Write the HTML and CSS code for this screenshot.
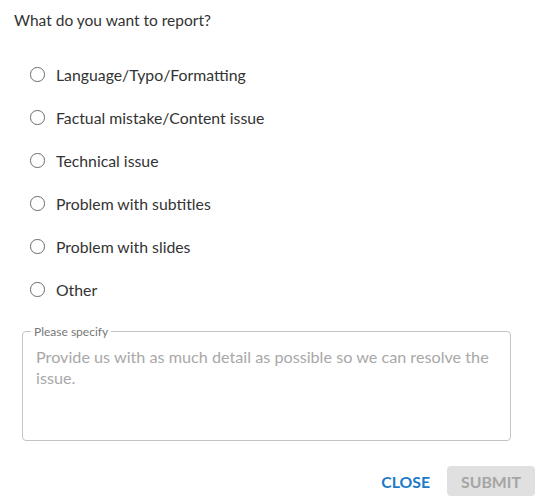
FILE: index.html
```html
<!DOCTYPE html>
<html>
<head>
<meta charset="utf-8">
<link rel="stylesheet" href="styles.css">
</head>
<body>
<div class="dialog">
  <div class="title">What do you want to report?</div>
  <div class="options">
    <label class="option"><span class="radio"></span><span class="label">Language/Typo/Formatting</span></label>
    <label class="option"><span class="radio"></span><span class="label">Factual mistake/Content issue</span></label>
    <label class="option"><span class="radio"></span><span class="label">Technical issue</span></label>
    <label class="option"><span class="radio"></span><span class="label">Problem with subtitles</span></label>
    <label class="option"><span class="radio"></span><span class="label">Problem with slides</span></label>
    <label class="option"><span class="radio"></span><span class="label">Other</span></label>
  </div>
  <fieldset class="specify">
    <legend class="legend">Please specify</legend>
    <div class="placeholder">Provide us with as much detail as possible so we can resolve the issue.</div>
  </fieldset>
  <div class="actions">
    <button class="btn close">CLOSE</button>
    <button class="btn submit">SUBMIT</button>
  </div>
</div>
</body>
</html>
```
FILE: styles.css
```css
html, body {
  margin: 0;
  padding: 0;
  background: #fff;
}
body {
  font-family: Lato, "Liberation Sans", sans-serif;
  color: #333;
}
.dialog {
  width: 539px;
  height: 499px;
  box-sizing: border-box;
  padding: 10px 0 0 14px;
  display: flex;
  flex-direction: column;
}
.title {
  font-size: 15.5px;
  line-height: 20px;
}
.options {
  display: flex;
  flex-direction: column;
  margin-top: 34px;
  padding-left: 16px;
}
.option {
  display: flex;
  align-items: center;
  height: 43px;
}
.option:first-child {
  margin-top: -11px;
}
.radio {
  width: 12.5px;
  height: 12.5px;
  border: 1.5px solid #6b6b6b;
  border-radius: 50%;
  margin-right: 11.5px;
}
.label {
  font-size: 15.8px;
  color: #333;
}
.specify {
  margin: 13px 0 0 8px;
  width: 489px;
  height: 117px;
  box-sizing: border-box;
  border: 1px solid #c4c4c4;
  border-radius: 4px;
  padding: 0 13px;
}
.legend {
  font-size: 12px;
  color: #777;
  padding: 0 3px;
  margin-left: -5px;
}
.placeholder {
  font-size: 16.2px;
  line-height: 21px;
  color: #a8a8a8;
  margin-top: 7px;
}
.actions {
  display: flex;
  justify-content: flex-end;
  align-items: center;
  margin-top: 25px;
  padding-right: 4px;
  gap: 17px;
}
.btn {
  font-family: Lato, "Liberation Sans", sans-serif;
  font-size: 15.8px;
  font-weight: 700;
  border: none;
  border-radius: 4px;
  height: 30px;
  padding: 0 14px;
  background: transparent;
}
.close {
  color: #1b7bc8;
  padding: 0;
}
.submit {
  background: #e0e0e0;
  color: #a5a5a5;
  width: 88px;
}
```
